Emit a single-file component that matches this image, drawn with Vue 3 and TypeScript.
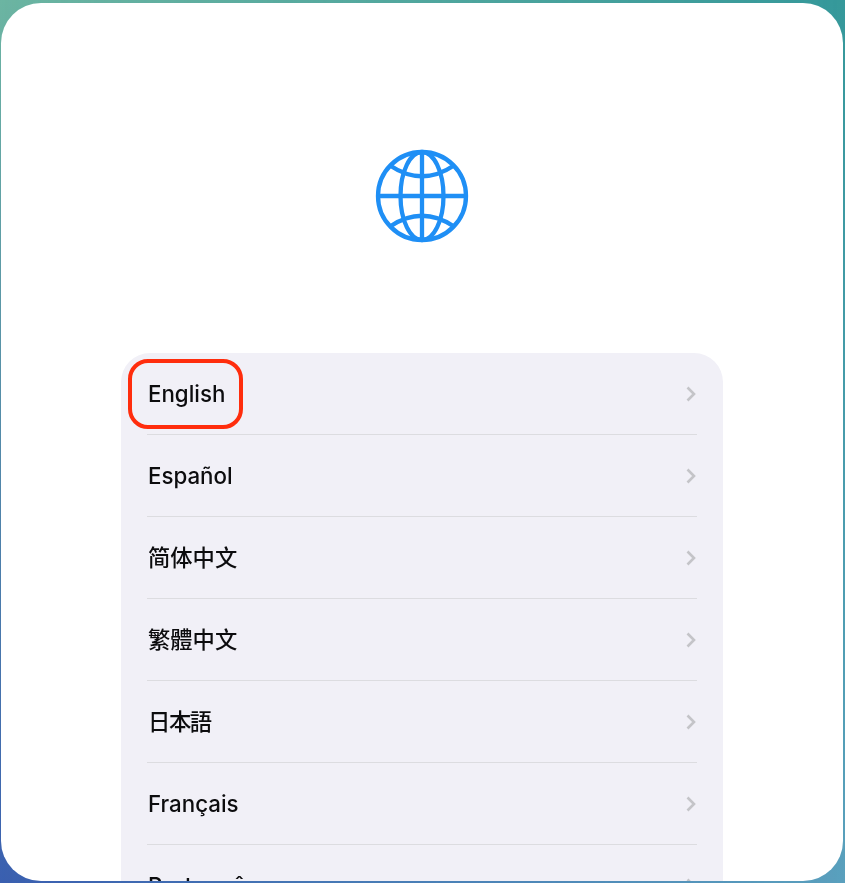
<script setup lang="ts">
interface Language {
  label: string
  lang: string
}

const languages: Language[] = [
  { label: 'English', lang: 'en' },
  { label: 'Español', lang: 'es' },
  { label: '简体中文', lang: 'zh-Hans' },
  { label: '繁體中文', lang: 'zh-Hant' },
  { label: '日本語', lang: 'ja' },
  { label: 'Français', lang: 'fr' },
  { label: 'Português', lang: 'pt' }
]
</script>

<template>
  <div class="page">
    <main class="sheet">
      <svg class="globe" viewBox="-48 -48 96 96" fill="none" aria-hidden="true">
        <circle r="44" />
        <ellipse rx="21.5" ry="44" />
        <path d="M0 -44V44M-44 0H44" />
        <path d="M-32 -30.5Q0 -9 32 -30.5M-32 30.5Q0 9 32 30.5" />
      </svg>

      <ul class="list">
        <li v-for="(item, i) in languages" :key="item.lang" class="row">
          <span class="row__label" :lang="item.lang">{{ item.label }}</span>
          <svg class="row__chevron" viewBox="0 0 10 16" fill="none" aria-hidden="true">
            <path d="M1.5 1.5 8 8l-6.5 6.5" />
          </svg>
          <span v-if="i === 0" class="row__highlight"></span>
        </li>
      </ul>
    </main>
  </div>
</template>

<style scoped>
.page {
  position: relative;
  box-sizing: border-box;
  width: 845px;
  height: 883px;
  padding: 3px 2px 2px 1px;
  overflow: hidden;
  background: linear-gradient(to bottom, #6cb5a2, #3a5fb0);
}

.page::before {
  content: '';
  position: absolute;
  inset: 0;
  background: linear-gradient(to bottom, #35989a, #5aa0bd);
  -webkit-mask-image: linear-gradient(to right, transparent, #000);
  mask-image: linear-gradient(to right, transparent, #000);
}

.sheet {
  position: relative;
  display: flex;
  flex-direction: column;
  align-items: center;
  height: 100%;
  padding-top: 145px;
  box-sizing: border-box;
  overflow: hidden;
  background: #fff;
  border-radius: 40px;
}

.globe {
  flex: none;
  width: 96px;
  height: 96px;
  stroke: #1f8ff5;
  stroke-width: 4.3;
  filter: blur(0.4px);
}

.list {
  flex: none;
  width: 602px;
  margin: 109px 0 0;
  padding: 0;
  list-style: none;
  background: #f1f0f7;
  border-radius: 29px;
  filter: blur(0.35px);
}

.row {
  position: relative;
  display: flex;
  align-items: center;
  justify-content: space-between;
  box-sizing: border-box;
  height: 82px;
  margin: 0 26px;
  border-bottom: 1.5px solid #dcdce0;
}

.row__label {
  padding-left: 1px;
  font-family: Inter, sans-serif;
  font-size: 22.3px;
  line-height: 28px;
  font-weight: 500;
  color: #0c0c0e;
}

.row__label:lang(zh-Hans),
.row__label:lang(zh-Hant),
.row__label:lang(ja) {
  padding-bottom: 4px;
  font-size: 22.3px;
  font-weight: 500;
}

.row__label:lang(zh-Hans) {
  font-family: 'Noto Sans CJK SC', sans-serif;
}

.row__label:lang(zh-Hant) {
  font-family: 'Noto Sans CJK TC', sans-serif;
}

.row__label:lang(ja) {
  font-family: 'Noto Sans CJK JP', sans-serif;
  letter-spacing: -1.4px;
}

.row__chevron {
  width: 10px;
  height: 16px;
  margin-right: 1px;
  stroke: #c4c4c8;
  stroke-width: 2.6;
}

.row__highlight {
  position: absolute;
  left: -19px;
  top: 6px;
  width: 115px;
  height: 70px;
  box-sizing: border-box;
  border: 4px solid #ff2d0d;
  border-radius: 20px;
}
</style>

<style>
html,
body {
  margin: 0;
  overflow: hidden;
}
</style>
